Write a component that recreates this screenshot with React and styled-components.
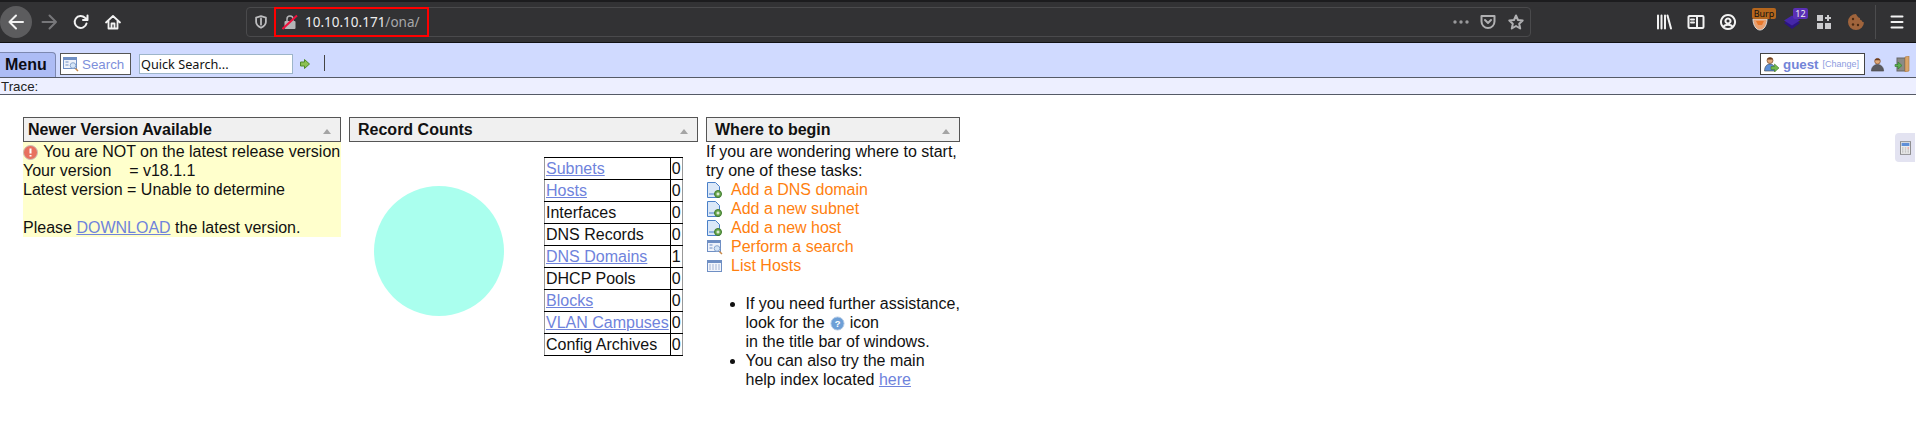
import React from 'react'
import styled, {createGlobalStyle} from 'styled-components'

const GlobalStyle = createGlobalStyle`
  html, body {
    margin: 0;
    padding: 0;
    background: #fff;
    color: #111;
    font-family: "Liberation Sans", Arial, sans-serif;
    font-size: 16px;
  }
`

const Page = styled.div`
  position: relative;
  width: 1916px;
  height: 426px;
  overflow: hidden;
`

const Chrome = styled.div`
  display: flex;
  align-items: center;
  height: 43px;
  box-sizing: border-box;
  background: #323234;
  border-top: 2px solid #1c1c1e;
  border-bottom: 1px solid #111113;
`

const BackButton = styled.div`
  display: flex;
  flex: none;
  align-items: center;
  justify-content: center;
  width: 32px;
  height: 32px;
  border-radius: 50%;
  background: #5c5c5e;
`

const Slot = styled.div`
  display: flex;
  align-items: center;
  justify-content: center;
  flex: none;
  width: 32px;
  height: 32px;
  position: relative;
`

const ForwardSlot = styled(Slot)`
  margin-left: 1px;
`

const UrlBar = styled.div`
  position: relative;
  display: flex;
  flex: none;
  align-items: center;
  width: 1285px;
  height: 30px;
  margin-left: 117px;
  box-sizing: border-box;
  border: 1px solid #4a4a4c;
  border-radius: 4px;
  padding-left: 6px;
`

const UrlBox = styled.div`
  display: flex;
  align-items: center;
  gap: 7px;
  width: 155px;
  height: 30px;
  margin-left: 5px;
  padding-left: 6px;
  box-sizing: border-box;
  border: 2px solid #f00;
  font-family: "Noto Sans", sans-serif;
  font-size: 13.5px;
  color: #eeeeef;
`

const UrlPath = styled.span`
  color: #a8a8aa;
`

const UrlTail = styled.div`
  display: flex;
  align-items: center;
  gap: 10px;
  margin-left: auto;
  margin-right: 5px;
`

const ToolbarRight = styled.div`
  display: flex;
  flex: none;
  align-items: center;
  margin-left: 117px;
`

const Separator = styled.div`
  width: 1px;
  height: 34px;
  margin: 0 12px 0 3px;
  background: #4c4c4e;
`

const BurpTag = styled.span`
  position: absolute;
  top: 2px;
  left: 8px;
  width: 24px;
  text-align: center;
  background: #b5661d;
  border-radius: 2px;
  font-family: "Noto Sans", sans-serif;
  font-size: 9px;
  line-height: 11px;
  color: #111;
`

const CountTag = styled.span`
  position: absolute;
  top: 2px;
  right: 0;
  width: 15px;
  text-align: center;
  background: #5a2fb5;
  border-radius: 2px;
  font-family: "Noto Sans", sans-serif;
  font-size: 9px;
  line-height: 11px;
  color: #eee;
`

const BurpCup = styled.svg`
  margin-top: 3px;
`

const MenuBar = styled.div`
  display: flex;
  align-items: flex-end;
  height: 35px;
  box-sizing: border-box;
  background: #d0daff;
  border-bottom: 1px solid #555a66;
`

const MenuTab = styled.div`
  flex: none;
  width: 56px;
  height: 25px;
  box-sizing: border-box;
  background: #adbcf5;
  border: 1px solid #7d88b0;
  border-bottom: 0;
  border-left: 0;
  border-radius: 0 4px 0 0;
  padding-left: 5px;
  font-weight: 700;
  font-size: 16px;
  line-height: 24px;
  color: #0c0c14;
`

const SearchButton = styled.div`
  display: flex;
  flex: none;
  align-items: center;
  gap: 3px;
  width: 71px;
  height: 22px;
  margin: 0 0 2px 4px;
  padding-left: 1px;
  box-sizing: border-box;
  background: #fff;
  border: 1px solid #555;
  font-size: 13.33px;
  color: #7d8fdb;
`

const QuickSearch = styled.div`
  flex: none;
  width: 154px;
  height: 20px;
  margin: 0 0 3px 8px;
  padding-left: 1px;
  box-sizing: border-box;
  background: #fff;
  border: 1px solid #9db5c9;
  font-family: "Noto Sans", sans-serif;
  font-size: 12.7px;
  line-height: 18px;
  color: #111;
`

const GoArrow = styled.div`
  display: flex;
  margin: 0 14px 8px 7px;
`

const VerticalRule = styled.div`
  width: 1px;
  height: 16px;
  margin-bottom: 6px;
  background: #444;
`

const UserBox = styled.div`
  display: flex;
  flex: none;
  align-items: center;
  width: 105px;
  height: 22px;
  margin: 0 0 2px auto;
  padding-left: 2px;
  box-sizing: border-box;
  background: #fff;
  border: 1px solid #444;
  color: #7385d8;
  font-size: 13.33px;
  font-weight: 700;
`

const UserName = styled.span`
  margin-left: 4px;
`

const ChangeLink = styled.span`
  margin-left: 4px;
  font-size: 9px;
  font-weight: 400;
  color: #8c9be0;
`

const UserIcons = styled.div`
  display: flex;
  align-items: center;
  gap: 9px;
  margin: 0 6px 5px 5px;
`

const TraceBar = styled.div`
  height: 17px;
  box-sizing: border-box;
  background: #edefff;
  border-bottom: 1px solid #555a66;
  padding-left: 1px;
  font-size: 13.33px;
  line-height: 17px;
  color: #222;
`

const Workspace = styled.div`
  display: flex;
  align-items: flex-start;
  gap: 8px;
  padding: 22px 0 0 23px;
`

const Panel = styled.section`
  flex: none;
  width: ${p => p.$w}px;
`

const PanelTitle = styled.div`
  display: flex;
  align-items: center;
  justify-content: space-between;
  height: 25px;
  box-sizing: border-box;
  padding: 0 9px 0 ${p => p.$inset}px;
  background: #f0f0f0;
  border: 1px solid #555;
  font-size: 16px;
  font-weight: 700;
  color: #111;
`

const Caret = styled.span`
  width: 0;
  height: 0;
  margin-top: 3px;
  border-left: 4px solid transparent;
  border-right: 4px solid transparent;
  border-bottom: 5px solid #a4a4a4;
`

const Notice = styled.div`
  height: 95px;
  background: #ffffcc;
  line-height: 19px;
  white-space: pre;
`

const NoticeIcon = styled.svg`
  vertical-align: -3px;
  margin-right: 1px;
`

const Link = styled.a`
  color: #6f83dc;
  text-decoration: underline;
`

const RecordBody = styled.div`
  display: flex;
  align-items: flex-start;
  padding: 15px 0 0 25px;
`

const Pie = styled.div`
  flex: none;
  width: 130px;
  height: 130px;
  margin: 29px 40px 0 0;
  border-radius: 50%;
  background: #aaffee;
`

const CountTable = styled.table`
  border-collapse: collapse;
  border: 1px solid #999;
  font-size: 16px;
  line-height: 19px;
`

const NameCell = styled.td`
  height: 21px;
  padding: 0 1px 0 1px;
  border: 1px solid #000;
  border-left: 0;
  white-space: nowrap;
`

const CountCell = styled.td`
  padding: 0 1px;
  border: 1px solid #000;
  border-right: 0;
`

const Paragraph = styled.div`
  line-height: 19px;
`

const TaskList = styled.div`
  display: flex;
  flex-direction: column;
`

const Task = styled.div`
  display: flex;
  align-items: center;
  height: 19px;
  gap: 8px;
  color: #ff7f0f;
`

const TaskIcon = styled.svg`
  flex: none;
  margin-left: 1px;
`

const HelpList = styled.ul`
  margin: 19px 0 0;
  padding-left: 39.5px;
  width: 260px;
  box-sizing: border-box;
  line-height: 19px;
`

const InlineHelp = styled.svg`
  vertical-align: -3px;
  margin: 0 5px;
`

const SideTab = styled.div`
  position: absolute;
  top: 133px;
  right: 1px;
  display: flex;
  align-items: center;
  justify-content: center;
  width: 20px;
  height: 29px;
  border-radius: 4px 0 0 4px;
  background: #e3e3f1;
`

const records = [
    ['Subnets', 0, true],
    ['Hosts', 0, true],
    ['Interfaces', 0, false],
    ['DNS Records', 0, false],
    ['DNS Domains', 1, true],
    ['DHCP Pools', 0, false],
    ['Blocks', 0, true],
    ['VLAN Campuses', 0, true],
    ['Config Archives', 0, false],
]

const Line = ({d, color = '#f2f2f2', width = 2, size = 18}) => (
    <svg width={size} height={size} viewBox="0 0 18 18" fill="none" stroke={color} strokeWidth={width} strokeLinecap="round" strokeLinejoin="round">
        <path d={d}/>
    </svg>
)

const AddPageIcon = () => (
    <TaskIcon width="16" height="16" viewBox="0 0 16 16">
        <path d="M.5 .5h8l4 4v11h-12z" fill="#dbe8f8" stroke="#4a80c8"/>
        <path d="M2 12h6" stroke="#4a80c8"/>
        <circle cx="11" cy="12" r="3.500" fill="#6aa84f" stroke="#3f7a2d"/>
        <path d="M9.500 12h3M11 10.500v3" stroke="#fff"/>
    </TaskIcon>
)

const SearchIcon = () => (
    <TaskIcon width="16" height="16" viewBox="0 0 16 16">
        <rect x=".5" y="1.500" width="13" height="11" fill="#eef2fa" stroke="#6f8fc4"/>
        <rect x="1" y="2" width="12" height="2" fill="#6f8fc4"/>
        <path d="M2.500 6h3M2.500 9h3" stroke="#6f8fc4"/>
        <circle cx="10" cy="9.500" r="2.800" fill="#d5e5f7" stroke="#8ba7cf"/>
        <path d="M12.500 12.500l2.500 2.500" stroke="#c98a4a" strokeWidth="1.500"/>
    </TaskIcon>
)

const ListIcon = () => (
    <TaskIcon width="16" height="16" viewBox="0 0 16 16">
        <rect x=".5" y="2.500" width="14" height="11" fill="#f2f5fb" stroke="#6f8fc4"/>
        <rect x="1" y="3" width="13" height="2" fill="#6f8fc4"/>
        <path d="M2 7h11M2 9h11M2 11h11" stroke="#a5b6d6" strokeDasharray="2 1"/>
    </TaskIcon>
)

const PersonIcon = ({size = 16, badge}) => (
    <svg width={size} height={size} viewBox="0 0 16 16">
        <circle cx={badge ? 7 : 8} cy="4.500" r="3" fill="#e0a878" stroke="#7a4a28" strokeWidth=".7"/>
        <path d={badge ? 'M4 3.500c.5-2.500 5.500-2.500 6 0z' : 'M5 3.500c.5-2.500 5.500-2.500 6 0z'} fill="#6b3d1e"/>
        <path d={badge ? 'M1.500 15c0-4.500 2.500-7 5.500-7s5.500 2.500 5.500 7z' : 'M1.500 15c0-4.500 3-7 6.500-7s6.500 2.500 6.500 7z'} fill={badge ? '#5b8fd8' : '#5a5a60'} stroke="#444" strokeWidth=".6"/>
        {badge && <path d="M8 10.500h3.500V8l4.500 4-4.500 4v-2.500H8z" fill="#72b84c" stroke="#3f7a2d" strokeWidth=".6"/>}
    </svg>
)

function App() {
    return (
        <Page>
            <GlobalStyle/>
            <Chrome>
                <BackButton>
                    <Line d="M16 9H2.500M9 2.500 2.500 9 9 15.500"/>
                </BackButton>
                <ForwardSlot><Line d="M16 9H2.500M9.500 2.500 16 9l-6.500 6.500" color="#77777a"/></ForwardSlot>
                <Slot><Line d="M14.500 10.500a6 6 0 1 1-1.500-5.700L15.500 7V2.500M15.500 7H11"/></Slot>
                <Slot><Line d="M2 9.500 9 3l7 6.500M4.500 8v7.500h9V8M7.500 15.500v-5h3v5" width={1.800}/></Slot>
                <UrlBar>
                    <Line d="M9 2.500 3.500 4v5c0 3 2.500 5 5.500 6.500 3-1.500 5.500-3.500 5.500-6.500V4zM9 5v7" color="#bdbdbf" size={16}/>
                    <UrlBox>
                        <svg width="16" height="16" viewBox="0 0 16 16" fill="none">
                            <rect x="2.500" y="7" width="11" height="8" rx="1" fill="#b5b5b7"/>
                            <path d="M5 7V5a3 3 0 0 1 6 0v2" stroke="#b5b5b7" strokeWidth="1.500"/>
                            <path d="M.5 15 15 1.500" stroke="#f0103c" strokeWidth="2"/>
                        </svg>
                        <span>10.10.10.171<UrlPath>/ona/</UrlPath></span>
                    </UrlBox>
                    <UrlTail>
                        <svg width="16" height="4" viewBox="0 0 16 4" fill="#9a9a9c">
                            <circle cx="2" cy="2" r="1.700"/><circle cx="8" cy="2" r="1.700"/><circle cx="14" cy="2" r="1.700"/>
                        </svg>
                        <Line d="M2.500 3h13v5.500a6.500 6.500 0 0 1-13 0zM6 7l3 3 3-3" color="#b0b0b2"/>
                        <Line d="M9 2.500l2 4.500 4.700.5-3.500 3.200 1 4.800L9 13l-4.200 2.500 1-4.800L2.300 7.500 7 7z" color="#b0b0b2"/>
                    </UrlTail>
                </UrlBar>
                <ToolbarRight>
                    <Slot><Line d="M3 2.500v13M6.500 2.500v13M10 2.500v13M12.500 2.500l3.500 13"/></Slot>
                    <Slot><Line d="M2.500 3h13a1 1 0 0 1 1 1v10a1 1 0 0 1-1 1h-13a1 1 0 0 1-1-1V4a1 1 0 0 1 1-1zM10 3v12M4 6.500h3M4 9.500h3"/></Slot>
                    <Slot><Line d="M9 2a7 7 0 1 0 .01 0zM9 5.500a2.500 2.500 0 1 0 .01 0zM4.500 14c1-3 8-3 9 0"/></Slot>
                    <Slot>
                        <BurpCup width="16" height="15" viewBox="0 0 16 15">
                            <path d="M1 3h14c0 6-3 11-7 11S1 9 1 3z" fill="#e8a070" stroke="#d8d8d8"/>
                            <path d="M4 5h8l-2 4H6z" fill="#e8782a"/>
                        </BurpCup>
                        <BurpTag>Burp</BurpTag>
                    </Slot>
                    <Slot>
                        <svg width="18" height="16" viewBox="0 0 18 16">
                            <path d="M1 9 9 4l8 5-8 6z" fill="#2c1580"/>
                            <path d="M1 6.500 9 1.500l8 5-8 5z" fill="#4527a8"/>
                        </svg>
                        <CountTag>12</CountTag>
                    </Slot>
                    <Slot>
                        <svg width="14" height="14" viewBox="0 0 14 14" fill="#cbcbcd">
                            <rect x="0" y="0" width="6" height="6"/>
                            <rect x="0" y="8" width="6" height="6"/>
                            <rect x="8" y="8" width="6" height="6"/>
                            <path d="M10 0h2v2h2v2h-2v2h-2V4H8V2h2z"/>
                        </svg>
                    </Slot>
                    <Slot>
                        <svg width="18" height="18" viewBox="0 0 18 18">
                            <path d="M9 1a8 8 0 1 0 8 8c-1 .5-2 0-2-1.500-1.500 0-2.500-1-2-2.500C11.500 5 10 3 9 1z" fill="#a0643c"/>
                            <circle cx="6" cy="6" r="1.200" fill="#4a2a14"/>
                            <circle cx="6" cy="11.500" r="1.200" fill="#4a2a14"/>
                            <circle cx="11" cy="12" r="1.200" fill="#4a2a14"/>
                        </svg>
                    </Slot>
                    <Separator/>
                    <Line d="M3.500 3.500h11M3.500 9h11M3.500 14.500h11"/>
                </ToolbarRight>
            </Chrome>
            <MenuBar>
                <MenuTab>Menu</MenuTab>
                <SearchButton><SearchIcon/>Search</SearchButton>
                <QuickSearch>Quick Search...</QuickSearch>
                <GoArrow>
                    <svg width="10" height="10" viewBox="0 0 10 10">
                        <path d="M.5 3h4V.5L9.500 5l-5 4.500V7h-4z" fill="#8cc152" stroke="#4f8a28"/>
                    </svg>
                </GoArrow>
                <VerticalRule/>
                <UserBox>
                    <PersonIcon badge/>
                    <UserName>guest</UserName>
                    <ChangeLink>[Change]</ChangeLink>
                </UserBox>
                <UserIcons>
                    <PersonIcon size={15}/>
                    <svg width="16" height="16" viewBox="0 0 16 16">
                        <rect x="3" y="2" width="8" height="13" fill="#8a8a86" stroke="#666"/>
                        <path d="M11 1l4-1v15l-4 1z" fill="#d9a468" stroke="#a8753d" strokeWidth=".6"/>
                        <path d="M1 8.500h3V6l4 3.500L4 13v-2.500H1z" fill="#5cb050" stroke="#2f7a2a" strokeWidth=".6"/>
                    </svg>
                </UserIcons>
            </MenuBar>
            <TraceBar>Trace:</TraceBar>
            <Workspace>
                <Panel $w={318}>
                    <PanelTitle $inset={4}>Newer Version Available<Caret/></PanelTitle>
                    <Notice>
                        <NoticeIcon width="15" height="15" viewBox="0 0 15 15">
                            <circle cx="7.500" cy="7.500" r="7" fill="#e8705f" stroke="#c9c0b8"/>
                            <path d="M7.500 3.500v5M7.500 10v1.500" stroke="#fff" strokeWidth="2"/>
                        </NoticeIcon>
                        {' You are NOT on the latest release version\n'}
                        {'Your version    = v18.1.1\n'}
                        {'Latest version = Unable to determine\n\n'}
                        Please <Link>DOWNLOAD</Link> the latest version.
                    </Notice>
                </Panel>
                <Panel $w={349}>
                    <PanelTitle $inset={8}>Record Counts<Caret/></PanelTitle>
                    <RecordBody>
                        <Pie/>
                        <CountTable>
                            <tbody>
                            {records.map(([name, count, linked]) => (
                                <tr key={name}>
                                    <NameCell>{linked ? <Link>{name}</Link> : name}</NameCell>
                                    <CountCell>{count}</CountCell>
                                </tr>
                            ))}
                            </tbody>
                        </CountTable>
                    </RecordBody>
                </Panel>
                <Panel $w={254}>
                    <PanelTitle $inset={8}>Where to begin<Caret/></PanelTitle>
                    <Paragraph>If you are wondering where to start,<br/>try one of these tasks:</Paragraph>
                    <TaskList>
                        <Task><AddPageIcon/>Add a DNS domain</Task>
                        <Task><AddPageIcon/>Add a new subnet</Task>
                        <Task><AddPageIcon/>Add a new host</Task>
                        <Task><SearchIcon/>Perform a search</Task>
                        <Task><ListIcon/>List Hosts</Task>
                    </TaskList>
                    <HelpList>
                        <li>
                            If you need further assistance,<br/>
                            look for the
                            <InlineHelp width="15" height="15" viewBox="0 0 16 16">
                                <circle cx="8" cy="8" r="7" fill="#6d9fd6" stroke="#b8cde6"/>
                                <text x="8" y="11.500" textAnchor="middle" fontSize="10" fontWeight="700" fill="#fff" fontFamily="Liberation Sans">?</text>
                            </InlineHelp>
                            icon<br/>
                            in the title bar of windows.
                        </li>
                        <li>You can also try the main<br/>help index located <Link>here</Link></li>
                    </HelpList>
                </Panel>
            </Workspace>
            <SideTab>
                <svg width="11" height="14" viewBox="0 0 14 17">
                    <rect x=".5" y=".5" width="13" height="16" fill="#eee" stroke="#777"/>
                    <rect x="2" y="2" width="10" height="4" fill="#5f8fd8"/>
                    <path d="M2.500 8.500h2M6 8.500h2M2.500 11h2M6 11h2M2.500 13.500h2M6 13.500h2M9.500 11h2M9.500 13.500h2" stroke="#999"/>
                    <path d="M9.500 8.500h2" stroke="#e05050"/>
                </svg>
            </SideTab>
        </Page>
    )
}

export default App
